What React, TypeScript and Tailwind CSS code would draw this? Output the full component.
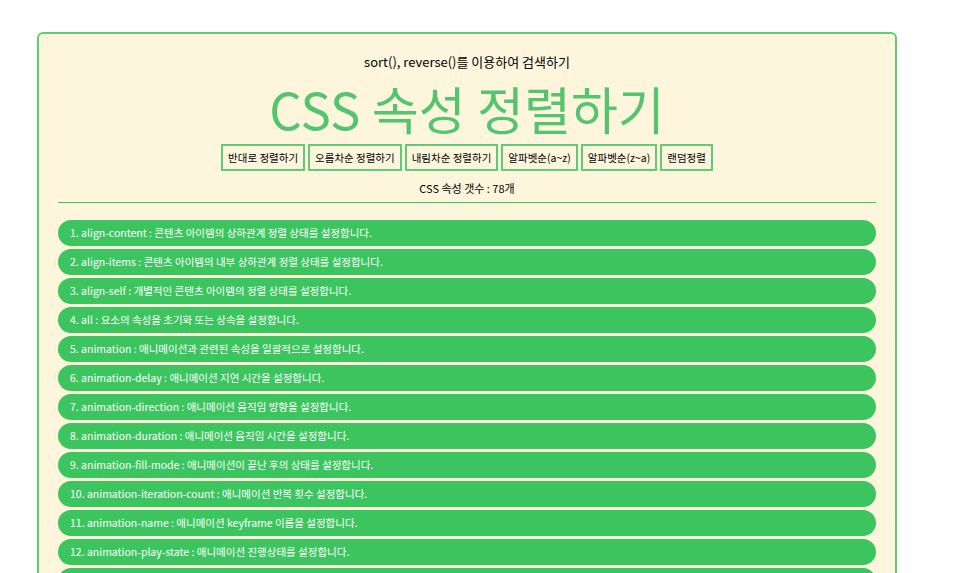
import { useState } from "react";

const cssList = [
  { name: "align-content", desc: "콘텐츠 아이템의 상하관계 정렬 상태를 설정합니다." },
  { name: "align-items", desc: "콘텐츠 아이템의 내부 상하관계 정렬 상태를 설정합니다." },
  { name: "align-self", desc: "개별적인 콘텐츠 아이템의 정렬 상태를 설정합니다." },
  { name: "all", desc: "요소의 속성을 초기화 또는 상속을 설정합니다." },
  { name: "animation", desc: "애니메이션과 관련된 속성을 일괄적으로 설정합니다." },
  { name: "animation-delay", desc: "애니메이션 지연 시간을 설정합니다." },
  { name: "animation-direction", desc: "애니메이션 움직임 방향을 설정합니다." },
  { name: "animation-duration", desc: "애니메이션 움직임 시간을 설정합니다." },
  { name: "animation-fill-mode", desc: "애니메이션이 끝난 후의 상태를 설정합니다." },
  { name: "animation-iteration-count", desc: "애니메이션 반복 횟수 설정합니다." },
  { name: "animation-name", desc: "애니메이션 keyframe 이름을 설정합니다." },
  { name: "animation-play-state", desc: "애니메이션 진행상태를 설정합니다." },
  { name: "animation-timing-function", desc: "애니메이션 움직임의 속도를 설정합니다." },
  { name: "backface-visibility", desc: "요소의 뒷면을 보여줄지 설정합니다." },
];

const buttons = [
  "반대로 정렬하기",
  "오름차순 정렬하기",
  "내림차순 정렬하기",
  "알파벳순(a~z)",
  "알파벳순(z~a)",
  "랜덤정렬",
];

export default function App() {
  const [items] = useState(cssList);

  return (
    <div
      className="h-[573px] bg-white pt-[32px] overflow-hidden"
      style={{ fontFamily: '"Noto Sans CJK KR", "Noto Sans", sans-serif' }}
    >
      <div className="ml-[37px] w-[860px] bg-[#fdf6dc] border-2 border-[#5ecb77] rounded-[6px] px-[19px] pt-[16px]">
        {/* header */}
        <p className="text-center text-[13px] text-black leading-[24px]">
          sort(), reverse()를 이용하여 검색하기
        </p>
        <h1 className="text-center text-[51px] leading-[64px] text-[#55c46e] mt-[2px]">
          CSS 속성 정렬하기
        </h1>

        {/* buttons */}
        <div className="flex justify-center gap-[3px] mt-[4px]">
          {buttons.map((b) => (
            <button
              key={b}
              className="h-[27px] px-[5px] border-2 border-[#5ecb77] text-[10.5px] text-black bg-transparent"
            >
              {b}
            </button>
          ))}
        </div>

        <p className="text-center text-[11px] text-black mt-[9px] leading-[16px]">CSS 속성 갯수 : 78개</p>
        <div className="h-px bg-[#3cc55f] mt-[6px]" />

        {/* list */}
        <ul className="mt-[17px] flex flex-col gap-[3px]">
          {items.map((item, i) => (
            <li
              key={item.name}
              className="h-[26px] flex items-center rounded-full bg-[#3cc55f] text-white text-[10.5px] pl-[12px]"
            >
              {i + 1}. {item.name} : {item.desc}
            </li>
          ))}
        </ul>
      </div>
    </div>
  );
}
